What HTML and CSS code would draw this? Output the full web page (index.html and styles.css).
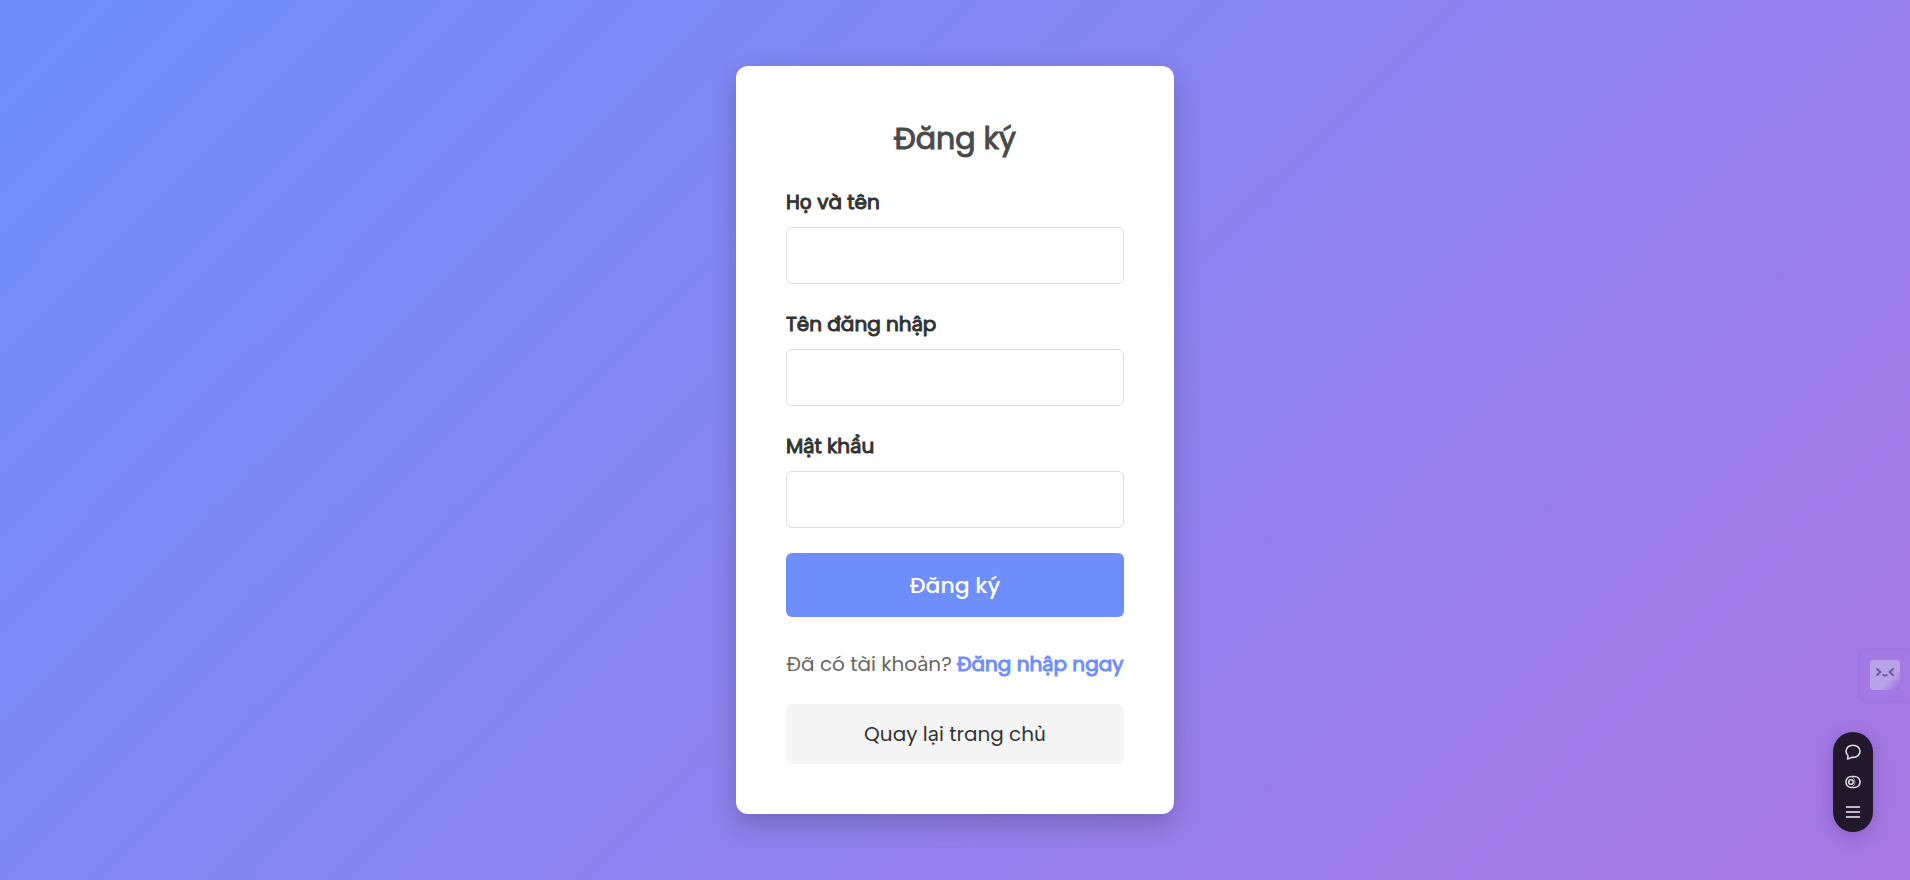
FILE: index.html
```html
<!DOCTYPE html>
<html lang="vi">
<head>
<meta charset="utf-8">
<meta name="viewport" content="width=device-width, initial-scale=1">
<title>Đăng ký</title>
<link rel="stylesheet" href="styles.css">
</head>
<body>
<main class="card">
  <h1 class="title">Đăng ký</h1>
  <form class="form">
    <div class="field">
      <label class="label" for="fullname">Họ và tên</label>
      <input class="input" type="text" id="fullname" name="fullname">
    </div>
    <div class="field">
      <label class="label" for="username">Tên đăng nhập</label>
      <input class="input" type="text" id="username" name="username">
    </div>
    <div class="field">
      <label class="label" for="password">Mật khẩu</label>
      <input class="input" type="password" id="password" name="password">
    </div>
    <button class="submit" type="submit">Đăng ký</button>
  </form>
  <p class="login">Đã có tài khoản? <a class="login-link" href="#login">Đăng nhập ngay</a></p>
  <a class="home" href="#home">Quay lại trang chủ</a>
</main>

<aside class="tab">
  <button class="face" type="button" aria-label="Trợ lý">
    <svg width="30" height="30" viewBox="0 0 30 30" fill="none" stroke="#6b55a0" stroke-width="2" stroke-linecap="round" stroke-linejoin="round">
      <path d="M7 9l3.500 3-3.500 3M23 9l-3.500 3 3.500 3M13.200 15q1.800 1.200 3.600 0"/>
    </svg>
  </button>
</aside>

<nav class="dock" aria-label="Công cụ">
  <button class="tool" type="button" aria-label="Bình luận">
    <svg width="16" height="16" viewBox="0 0 16 16" fill="none" stroke="currentColor" stroke-width="1.600" stroke-linejoin="round">
      <path d="M2.500 15 3 11.500C1.600 10.300 1 9 1 7.300 1 3.800 4 1.200 8 1.200s7 2.600 7 6.100-3 6.100-7 6.100H6.500Z"/>
    </svg>
  </button>
  <button class="tool" type="button" aria-label="Chuyển đổi">
    <svg width="16" height="16" viewBox="0 0 16 16" fill="none" stroke="currentColor" stroke-width="1.600">
      <rect x="1" y="2.500" width="14" height="11" rx="5.300"/>
      <circle cx="6" cy="8" r="2.300"/>
      <path d="M7.500 3.500q2.500 1 2.500 4.500t-2.500 4.500" stroke-width="0.600"/>
    </svg>
  </button>
  <button class="tool" type="button" aria-label="Menu">
    <svg width="16" height="16" viewBox="0 0 16 16" fill="none" stroke="#bdb8c2" stroke-width="2">
      <path d="M1 3h14M1 8h14M1 13h14"/>
    </svg>
  </button>
</nav>
</body>
</html>
```
FILE: styles.css
```css
* {
  box-sizing: border-box;
}

body {
  margin: 0;
  min-height: 100vh;
  display: flex;
  align-items: center;
  justify-content: center;
  background: linear-gradient(135deg, #6e8efb, #a777e3);
  color: #333;
  font-family: Poppins, Inter, sans-serif;
  font-size: 20px;
  line-height: 32px;
}

.card {
  width: 100%;
  max-width: 438px;
  padding: 50px;
  border-radius: 12px;
  background: #fff;
  box-shadow: 0 10px 25px rgba(0, 0, 0, 0.2);
}

.title {
  margin: 0 0 25px;
  color: #4a4a4a;
  font-size: 30px;
  font-weight: 400;
  -webkit-text-stroke: 1px;
  line-height: 46px;
  text-align: center;
}

.field {
  margin-bottom: 25px;
}

.label {
  display: block;
  margin-bottom: 10px;
  line-height: 30px;
  -webkit-text-stroke: 1px;
}

.input {
  display: block;
  width: 100%;
  height: 57px;
  padding: 12px 16px;
  border: 1px solid #ddd;
  border-radius: 6px;
  background: #fff;
  font: inherit;
}

.submit {
  display: block;
  width: 100%;
  padding: 17px 16px 15px;
  border: 0;
  border-radius: 6px;
  background: #6e8efb;
  color: #fff;
  font: inherit;
  font-size: 22px;
  font-weight: 500;
  cursor: pointer;
}

.login {
  margin: 31px 0 24px;
  color: #666;
  text-align: center;
  white-space: nowrap;
}

.login-link {
  color: #6e8efb;
  -webkit-text-stroke: 1px;
  text-decoration: none;
}

.home {
  display: block;
  padding: 14px;
  border-radius: 6px;
  background: #f5f5f5;
  color: #333;
  text-align: center;
  text-decoration: none;
}

.tab {
  position: fixed;
  right: 0;
  bottom: 180px;
  padding: 10px;
  border-radius: 8px 0 0 8px;
  box-shadow: 0 1px 4px rgba(80, 40, 160, 0.08);
}

.face {
  display: block;
  padding: 0;
  border: 0;
  border-radius: 3px;
  background: linear-gradient(135deg, #b9a2e8 65%, #9c68dc);
}

.face svg {
  display: block;
}

.dock {
  position: fixed;
  right: 37px;
  bottom: 48px;
  display: flex;
  flex-direction: column;
  gap: 14px;
  padding: 12px;
  border-radius: 20px;
  background: #21182c;
  box-shadow: 0 4px 16px rgba(50, 20, 90, 0.25);
}

.tool {
  display: block;
  padding: 0;
  border: 0;
  background: none;
  color: #ddd8e2;
}

.tool svg {
  display: block;
}
```
